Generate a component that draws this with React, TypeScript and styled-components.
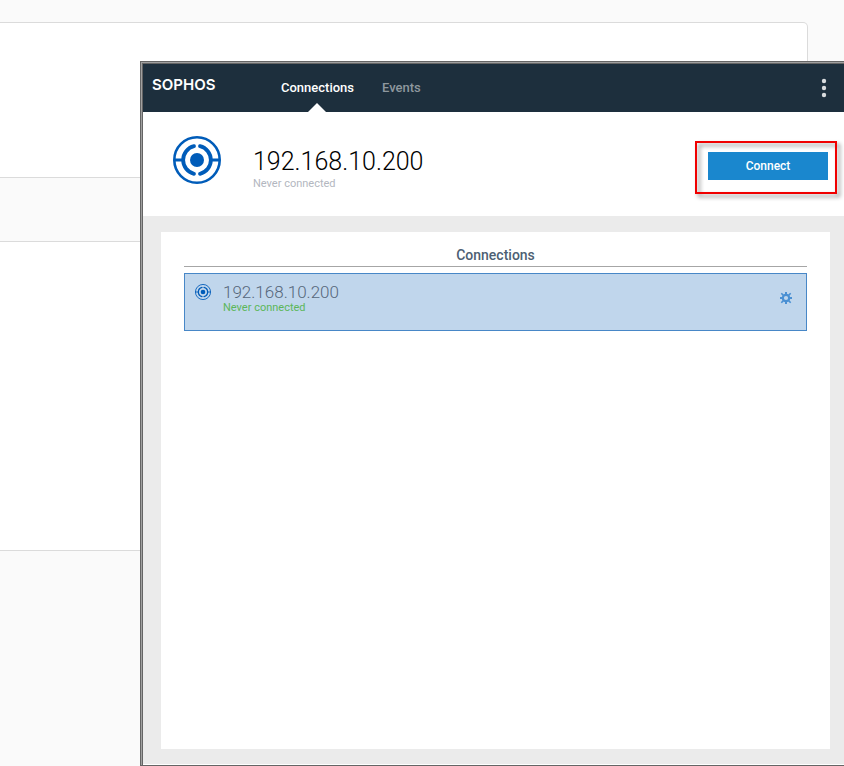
import React, { useState } from "react";
import styled, { createGlobalStyle } from "styled-components";

const GlobalStyle = createGlobalStyle`
  *, *::before, *::after { box-sizing: border-box; }
  body {
    margin: 0;
    background: #fafafa;
    color: #000;
    font-family: Roboto, "Liberation Sans", sans-serif;
  }
  button { font: inherit; border: 0; padding: 0; margin: 0; cursor: pointer; background: none; }
`;

const Desktop = styled.div`
  position: relative;
  min-height: 100vh;
  overflow: hidden;
  padding-top: 22px;
`;

const BackPanels = styled.div`
  display: flex;
  flex-direction: column;
  gap: 63px;
  margin-right: 36px;
`;

const BackPanel = styled.div<{ $height: number }>`
  min-height: ${(p) => p.$height}px;
  background: #fff;
  border: 1px solid #dbdbdb;
  border-left: 0;
  border-radius: 0 5px 5px 0;
`;

const Window = styled.div`
  position: absolute;
  inset: 61px 0 0 140px;
  display: flex;
  flex-direction: column;
  background: #ebebeb;
  border: 1px solid #656565;
  border-right: 0;
  box-shadow: inset 1px 1px 0 #a0a0a0, inset 2px 2px 0 #656565, inset 0 -1px 0 #fff;
  padding: 2px 0 1px 2px;
`;

const Header = styled.header`
  display: flex;
  align-items: stretch;
  height: 48px;
  background: #1d2f3d;
`;

const Logo = styled.div`
  width: 128px;
  padding: 11px 0 0 9px;
  color: #fff;
  font: 600 15px/20px Inter, sans-serif;
`;

const Tabs = styled.nav`
  display: flex;
  flex: 1;
  gap: 8px;
`;

const Tab = styled.button<{ $active: boolean }>`
  position: relative;
  padding: 0 10px;
  color: ${(p) => (p.$active ? "#fff" : "#8e979e")};
  font-size: 13px;
  font-weight: 500;
  line-height: 16px;

  &::after {
    content: "";
    display: ${(p) => (p.$active ? "block" : "none")};
    position: absolute;
    bottom: 0;
    left: 50%;
    margin-left: -10px;
    border: 9px solid transparent;
    border-top: 0;
    border-bottom-color: #fff;
  }
`;

const MenuButton = styled.button`
  display: flex;
  align-items: center;
  justify-content: center;
  width: 40px;
`;

const Summary = styled.section`
  display: flex;
  align-items: center;
  height: 104px;
  padding: 0 16px 0 30px;
  background: #fff;
`;

const SummaryIcon = styled.div`
  display: flex;
  width: 80px;
  padding-bottom: 8px;
`;

const Details = styled.div`
  flex: 1;
  min-width: 0;
  padding-top: 11px;
`;

const Address = styled.h1`
  margin: 0;
  font-size: 25px;
  font-weight: 300;
  line-height: 28px;
`;

const Status = styled.p<{ $tone: "muted" | "ready" }>`
  margin: 0;
  color: ${(p) => (p.$tone === "muted" ? "#b3b7c0" : "#5cb65a")};
  font-size: 11px;
  line-height: 16px;
`;

const ConnectArea = styled.div`
  position: relative;
  margin-bottom: -4px;

  &::after {
    content: "";
    position: absolute;
    inset: -11px -9px -14px -13px;
    border: 2px solid #f00000;
    filter: drop-shadow(3px 3px 2px rgba(0, 0, 0, 0.45));
    pointer-events: none;
  }
`;

const ConnectButton = styled.button`
  display: block;
  width: 120px;
  height: 28px;
  background: #1a87ce;
  color: #fff;
  font-size: 12px;
  font-weight: 500;
`;

const Body = styled.main`
  display: flex;
  flex: 1;
  padding: 16px 14px 15px 18px;
`;

const Card = styled.section`
  flex: 1;
  padding: 13px 23px;
  background: #fff;
`;

const CardTitle = styled.h2`
  margin: 0 0 6px;
  border-bottom: 1px solid #a6a6a6;
  color: #4d5f73;
  font-size: 14px;
  font-weight: 500;
  line-height: 21px;
  text-align: center;
`;

const List = styled.ul`
  margin: 0;
  padding: 0;
  list-style: none;
`;

const Row = styled.li`
  display: flex;
  align-items: flex-start;
  height: 58px;
  padding: 10px 14px 0 10px;
  background: #c0d6ec;
  border: 1px solid #4787c7;
`;

const RowText = styled.div`
  flex: 1;
  padding-left: 12px;
`;

const RowAddress = styled.h3`
  margin: 0;
  color: #56677b;
  font-size: 17px;
  font-weight: 300;
  line-height: 16px;
`;

const GearButton = styled.button`
  display: flex;
  padding-top: 8px;
`;

const TargetIcon = ({ size }: { size: number }) => (
  <svg width={size} height={size} viewBox="0 0 48 48" fill="none" stroke="#005cb9" aria-hidden="true">
    <circle cx="24" cy="24" r="22.7" strokeWidth="2.6" />
    <path d="M1 24h10M37 24h10" strokeWidth="2.8" />
    <path d="M21 10.2a14.2 14.2 0 0 0 0 27.6M27 10.2a14.2 14.2 0 0 1 0 27.6" strokeWidth="3.8" strokeLinecap="round" />
    <circle cx="24" cy="24" r="7" fill="#005cb9" stroke="none" />
  </svg>
);

const GearIcon = () => (
  <svg width="12" height="12" viewBox="0 0 12 12" fill="none" stroke="#4a90d3" aria-hidden="true">
    <circle cx="6" cy="6" r="3.2" strokeWidth="2.2" />
    <path d="M6 0v2M6 10v2M0 6h2M10 6h2" strokeWidth="2" />
    <path d="M1.3 1.3 3.4 3.4M8.6 8.6l2.1 2.1M1.3 10.7l2.1-2.1M8.6 3.4l2.1-2.1" strokeWidth="1.6" />
  </svg>
);

const DotsIcon = () => (
  <svg width="6" height="20" viewBox="0 0 6 20" fill="#d9dcde" aria-hidden="true">
    <circle cx="3" cy="3" r="2.2" />
    <circle cx="3" cy="10" r="2.2" />
    <circle cx="3" cy="17" r="2.2" />
  </svg>
);

const tabs = ["Connections", "Events"];
const connections = [{ address: "192.168.10.200", status: "Never connected" }];

export default function App() {
  const [active, setActive] = useState(tabs[0]);
  const current = connections[0];

  return (
    <>
      <GlobalStyle />
      <Desktop>
        <BackPanels>
          <BackPanel $height={156} />
          <BackPanel $height={310} />
        </BackPanels>
        <Window>
          <Header>
            <Logo>SOPHOS</Logo>
            <Tabs>
              {tabs.map((tab) => (
                <Tab key={tab} $active={tab === active} onClick={() => setActive(tab)}>
                  {tab}
                </Tab>
              ))}
            </Tabs>
            <MenuButton aria-label="Menu">
              <DotsIcon />
            </MenuButton>
          </Header>
          <Summary>
            <SummaryIcon>
              <TargetIcon size={48} />
            </SummaryIcon>
            <Details>
              <Address>{current.address}</Address>
              <Status $tone="muted">{current.status}</Status>
            </Details>
            <ConnectArea>
              <ConnectButton>Connect</ConnectButton>
            </ConnectArea>
          </Summary>
          <Body>
            <Card>
              <CardTitle>Connections</CardTitle>
              <List>
                {connections.map((item) => (
                  <Row key={item.address}>
                    <TargetIcon size={16} />
                    <RowText>
                      <RowAddress>{item.address}</RowAddress>
                      <Status $tone="ready">{item.status}</Status>
                    </RowText>
                    <GearButton aria-label="Connection settings">
                      <GearIcon />
                    </GearButton>
                  </Row>
                ))}
              </List>
            </Card>
          </Body>
        </Window>
      </Desktop>
    </>
  );
}
